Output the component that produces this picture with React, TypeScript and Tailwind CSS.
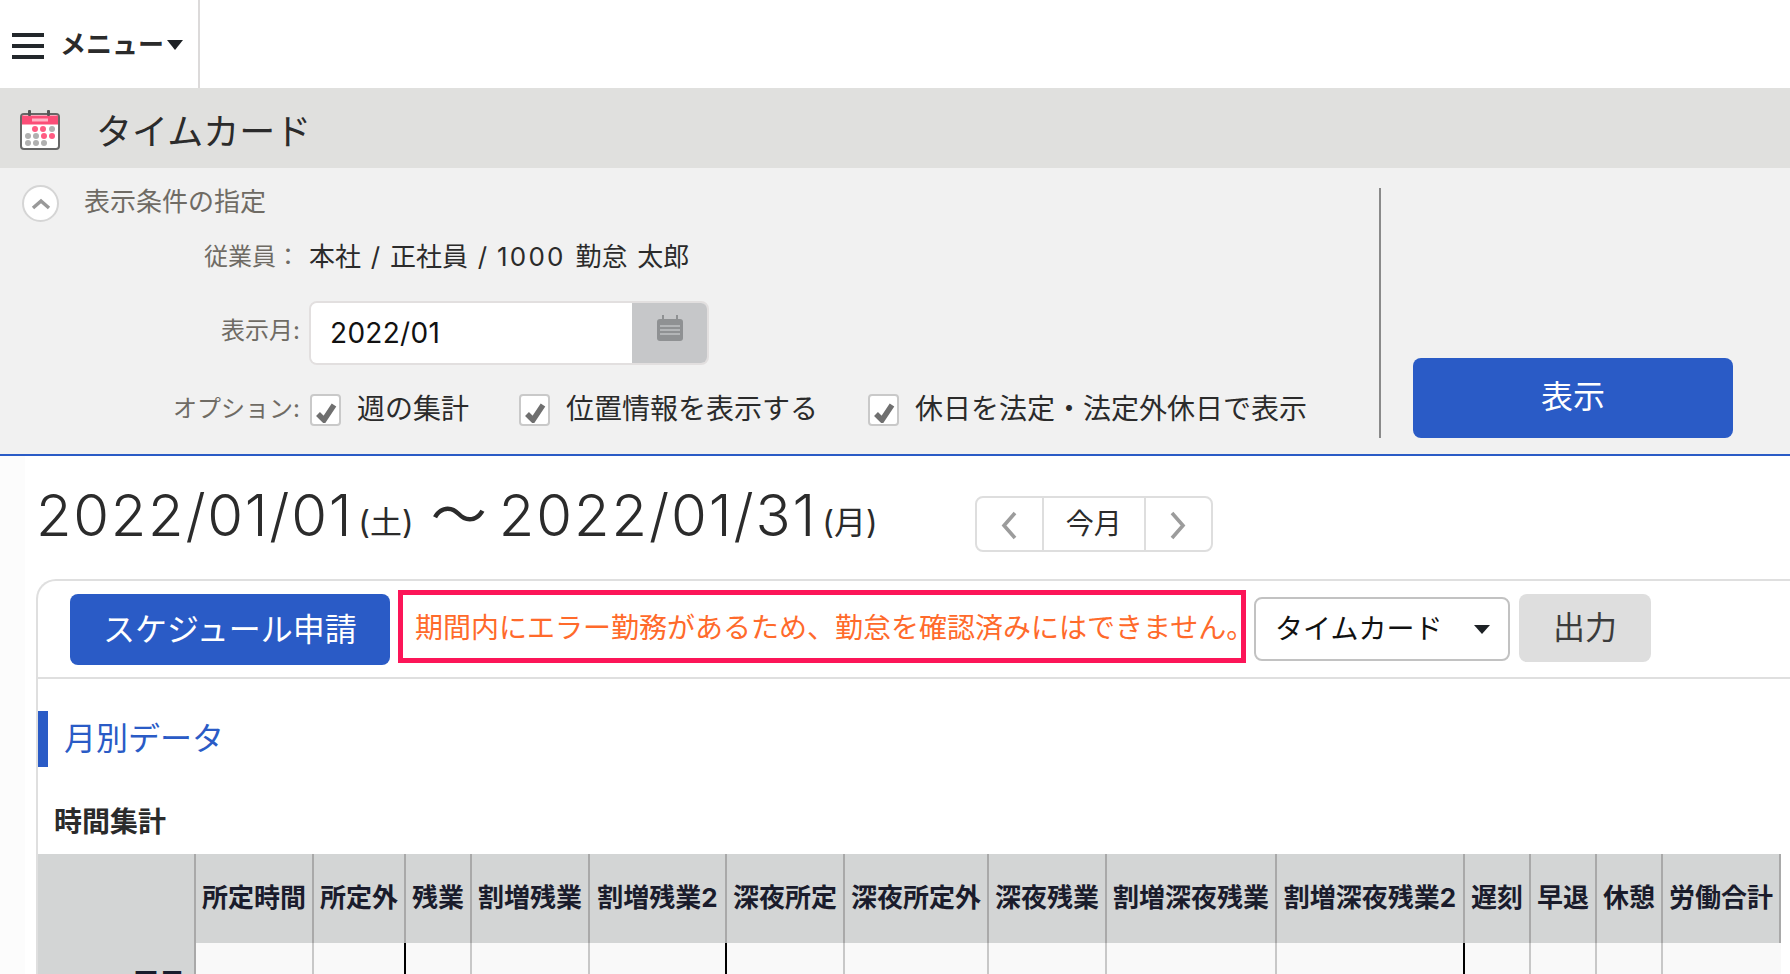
const jp = "font-['Inter','Noto_Sans_CJK_JP','Noto_Sans',sans-serif]";

function Chevron({ dir }: { dir: "left" | "right" }) {
  return (
    <svg width="20" height="30" viewBox="0 0 20 30" fill="none">
      <path d={dir === "left" ? "M16 3 L5 15.5 L16 28" : "M4 3 L15 15.5 L4 28"} stroke="#9c9c9c" strokeWidth="3.6" />
    </svg>
  );
}

function CalendarIcon() {
  const dots: [number, number, string][] = [
    [15, 19, "#ff5b82"], [23, 19, "#ff5b82"], [32, 19, "#b0b0b0"],
    [8, 26, "#b0b0b0"], [16, 26, "#b0b0b0"], [24, 26, "#ff5b82"], [32, 26, "#ff5b82"],
    [8, 33, "#b0b0b0"], [16, 33, "#b0b0b0"], [24, 33, "#b0b0b0"],
  ];
  return (
    <svg width="40" height="40" viewBox="0 0 40 40" className="mt-[3px] shrink-0">
      <rect x="1" y="4" width="38" height="35" rx="3" fill="#fff" stroke="#666" strokeWidth="2" />
      <rect x="2" y="5.5" width="36" height="9" fill="#fb4d77" />
      <rect x="12" y="8.5" width="16" height="3" fill="#ffb4c6" />
      <rect x="8" y="0" width="3" height="6" rx="1" fill="#555" />
      <rect x="27" y="0" width="3" height="6" rx="1" fill="#555" />
      {dots.map(([x, y, c]) => (
        <circle key={`${x}-${y}`} cx={x} cy={y} r="3" fill={c} />
      ))}
    </svg>
  );
}

function SmallCalendar() {
  return (
    <svg width="28" height="26" viewBox="0 0 28 26">
      <rect x="1" y="4" width="26" height="22" rx="3" fill="#8f9193" />
      <rect x="6" y="0" width="2" height="6" fill="#8f9193" />
      <rect x="20" y="0" width="2" height="6" fill="#8f9193" />
      <rect x="4" y="10" width="20" height="2" fill="#b3b5b7" />
      <rect x="4" y="14" width="20" height="2" fill="#b3b5b7" />
      <rect x="4" y="18" width="20" height="2" fill="#b3b5b7" />
    </svg>
  );
}

function Check() {
  return (
    <span className="flex h-[32px] w-[31px] shrink-0 items-end justify-center rounded-[4px] border-2 border-[#c9c9c9] bg-white pb-[1px]">
      <svg width="24" height="21" viewBox="0 0 24 21" fill="none">
        <path d="M4 12 L10 18 L20 3" stroke="#6f6f6f" strokeWidth="5.5" />
      </svg>
    </span>
  );
}

const cols: [string, number][] = [
  ["所定時間", 118], ["所定外", 92], ["残業", 66], ["割増残業", 118], ["割増残業2", 137], ["深夜所定", 118],
  ["深夜所定外", 144], ["深夜残業", 118], ["割増深夜残業", 170], ["割増深夜残業2", 188], ["遅刻", 66], ["早退", 66],
  ["休憩", 66], ["労働合計", 118],
];
const darkBefore = new Set(["残業", "深夜所定", "遅刻"]);

export default function App() {
  return (
    <div className={`${jp} h-[974px] w-[1790px] overflow-hidden bg-white text-[#2b2b2b]`}>
      <header className="flex h-[88px] bg-white">
        <div className="flex h-full w-[200px] items-center border-r-2 border-[#dcdada] pl-[12px] pt-[3px]">
          <span className="flex w-[32px] flex-col gap-[7px]">
            <i className="block h-[4px] bg-[#23272b]" />
            <i className="block h-[4px] bg-[#23272b]" />
            <i className="block h-[4px] bg-[#23272b]" />
          </span>
          <span className="mb-[2px] ml-[16px] text-[26px] font-bold leading-none text-[#2b2b2b]">メニュー</span>
          <span className="mb-[2px] ml-[3px] h-0 w-0 border-x-[8px] border-t-[10px] border-x-transparent border-t-[#1d2125]" />
        </div>
      </header>

      <div className="flex h-[80px] items-center bg-[#e0e0de] pl-[20px]">
        <CalendarIcon />
        <h1 className="ml-[36px] mt-[8px] text-[36px] font-normal leading-none">タイムカード</h1>
      </div>

      <section className="flex h-[288px] border-b-2 border-[#2a5bc6] bg-[#f1f1f1]">
        <div className="w-[1379px] shrink-0">
          <div className="flex h-[64px] items-center pl-[22px] pt-[7px]">
            <span className="flex h-[37px] w-[37px] items-center justify-center rounded-full border-2 border-[#d5d5d5] bg-white">
              <svg width="20" height="12" viewBox="0 0 20 12" fill="none"><path d="M2 10 L10 3 L18 10" stroke="#999" strokeWidth="3.5" /></svg>
            </span>
            <span className="mb-[4px] ml-[25px] text-[26px] leading-none text-[#6f6b64]">表示条件の指定</span>
          </div>
          <div className="mt-[5px] flex h-[40px] items-center">
            <span className="w-[300px] text-right text-[24px] leading-none text-[#6f6b64]">従業員：</span>
            <span className="ml-[9px] text-[26px] leading-none [word-spacing:2.5px]">本社 / 正社員 / <span className="tracking-[2.2px]">1000</span> 勤怠 太郎</span>
          </div>
          <div className="mt-[24px] flex h-[64px] items-center">
            <span className="mb-[4px] w-[301px] pr-[1px] text-right text-[24px] leading-none text-[#6f6b64]">表示月:</span>
            <div className="ml-[8px] flex h-[64px] w-[400px] overflow-hidden rounded-[8px] border-2 border-[#e2dfdf]">
              <div className="flex flex-1 items-center bg-white pb-[1px] pl-[19px] text-[28px] leading-none tracking-[0.3px] text-[#111]">2022/01</div>
              <div className="flex w-[75px] justify-center bg-[#c6c7c9] pt-[12px]"><SmallCalendar /></div>
            </div>
          </div>
          <div className="mt-[20px] flex h-[50px] items-center">
            <span className="mb-[2px] w-[301px] pr-[1px] text-right text-[24px] leading-none text-[#6f6b64]">オプション:</span>
            <div className="ml-[9px] flex items-center text-[28px] leading-none">
              <Check /><span className="mb-[2px] ml-[16px]">週の集計</span>
              <span className="ml-[50px]"><Check /></span><span className="mb-[2px] ml-[16px]">位置情報を表示する</span>
              <span className="ml-[50px]"><Check /></span><span className="mb-[2px] ml-[16px]">休日を法定・法定外休日で表示</span>
            </div>
          </div>
        </div>
        <div className="mt-[20px] h-[250px] w-[2px] bg-[#8a8a8a]" />
        <div className="ml-[32px] mt-[190px] flex h-[80px] w-[320px] items-center justify-center rounded-[8px] bg-[#2a5bc6] pb-[2px] text-[32px] leading-none text-white">表示</div>
      </section>

      <main className="flex bg-white">
        <div className="w-[25px] shrink-0 bg-[#fcfcfc]" />
        <div className="min-w-0 flex-1 pl-[11px]">
          <div className="flex h-[123px] items-center pb-[6px]">
            <span className="text-[58px] font-light leading-none tracking-[1.7px]">2022/01/01</span>
            <span className="ml-[5px] mt-[16px] text-[32px] leading-none">(土)</span>
            <span className="ml-[17px] text-[56px] leading-none">～</span>
            <span className="ml-[12px] text-[58px] font-light leading-none tracking-[1.9px]">2022/01/31</span>
            <span className="ml-[5px] mt-[16px] text-[32px] leading-none">(月)</span>
            <div className="ml-[97px] mt-[18px] flex h-[56px] w-[238px] rounded-[8px] border-2 border-[#dedede]">
              <span className="flex w-[65px] items-center justify-center pt-[3px]"><Chevron dir="left" /></span>
              <span className="flex w-[104px] items-center justify-center border-x-2 border-[#dedede] text-[28px] leading-none">今月</span>
              <span className="flex flex-1 items-center justify-center pt-[3px]"><Chevron dir="right" /></span>
            </div>
          </div>

          <div className="rounded-tl-[20px] border-l-2 border-t-2 border-[#dfdfdf]">
            <div className="flex h-[98px] items-center border-b-2 border-[#dfdfdf] pl-[32px]">
              <div className="flex h-[71px] w-[320px] items-center justify-center rounded-[8px] bg-[#2a5bc6] pt-[2px] text-[32px] leading-none text-white">スケジュール申請</div>
              <div className="mb-[5px] ml-[8px] flex h-[73px] w-[848px] items-center border-[5px] border-[#fc1558] pl-[12px] pt-[2px] text-[28px] leading-none whitespace-nowrap text-[#ff6a2b]">期間内にエラー勤務があるため、勤怠を確認済みにはできません。</div>
              <div className="ml-[8px] flex h-[64px] w-[256px] items-center justify-between rounded-[8px] border-2 border-[#c2c2c2] pl-[19px] pr-[18px] text-[28px] leading-none text-[#111]">
                <span className="mb-[1px]">タイムカード</span>
                <span className="h-0 w-0 border-x-[8px] border-t-[9px] border-x-transparent border-t-[#1d2125]" />
              </div>
              <div className="mb-[2px] ml-[9px] flex h-[68px] w-[132px] items-center justify-center rounded-[8px] bg-[#dedede] pb-[1px] text-[32px] leading-none text-[#3c3c3c]">出力</div>
            </div>

            <div className="mt-[32px] flex h-[56px] items-center border-l-[10px] border-[#2a5bc6]">
              <span className="ml-[16px] text-[32px] leading-none text-[#2a5bc6]">月別データ</span>
            </div>

            <div className="mt-[41px] pl-[16px] text-[28px] font-bold leading-none text-[#2b2b2b]">時間集計</div>

            <div className="mt-[18px] flex h-[89px] w-[1743px] bg-[#d3d5d5]">
              <div className="w-[156px] shrink-0" />
              {cols.map(([c, w]) => (
                <div key={c} style={{ width: w }} className="flex shrink-0 items-center justify-center border-l-2 border-[#a9a9a9] pb-[1px] text-[26px] font-bold leading-none whitespace-nowrap text-[#1a1c2c]">{c}</div>
              ))}
              <div className="w-[2px] bg-[#a9a9a9]" />
            </div>
            <div className="flex h-[31px] w-[1743px] bg-[#f9f9f9]">
              <div className="h-full w-[156px] shrink-0 bg-[#d3d5d5] pr-[9px] pt-[27px] text-right text-[26px] font-bold leading-none text-[#1a1c2c]">平日</div>
              {cols.map(([c, w], i) => (
                <div key={c} style={{ width: w }} className={`shrink-0 border-l-2 ${i === 0 ? "border-[#a9a9a9]" : darkBefore.has(c) ? "border-black" : "border-[#c8c8c8]"}`} />
              ))}
            </div>
          </div>
        </div>
      </main>
    </div>
  );
}
